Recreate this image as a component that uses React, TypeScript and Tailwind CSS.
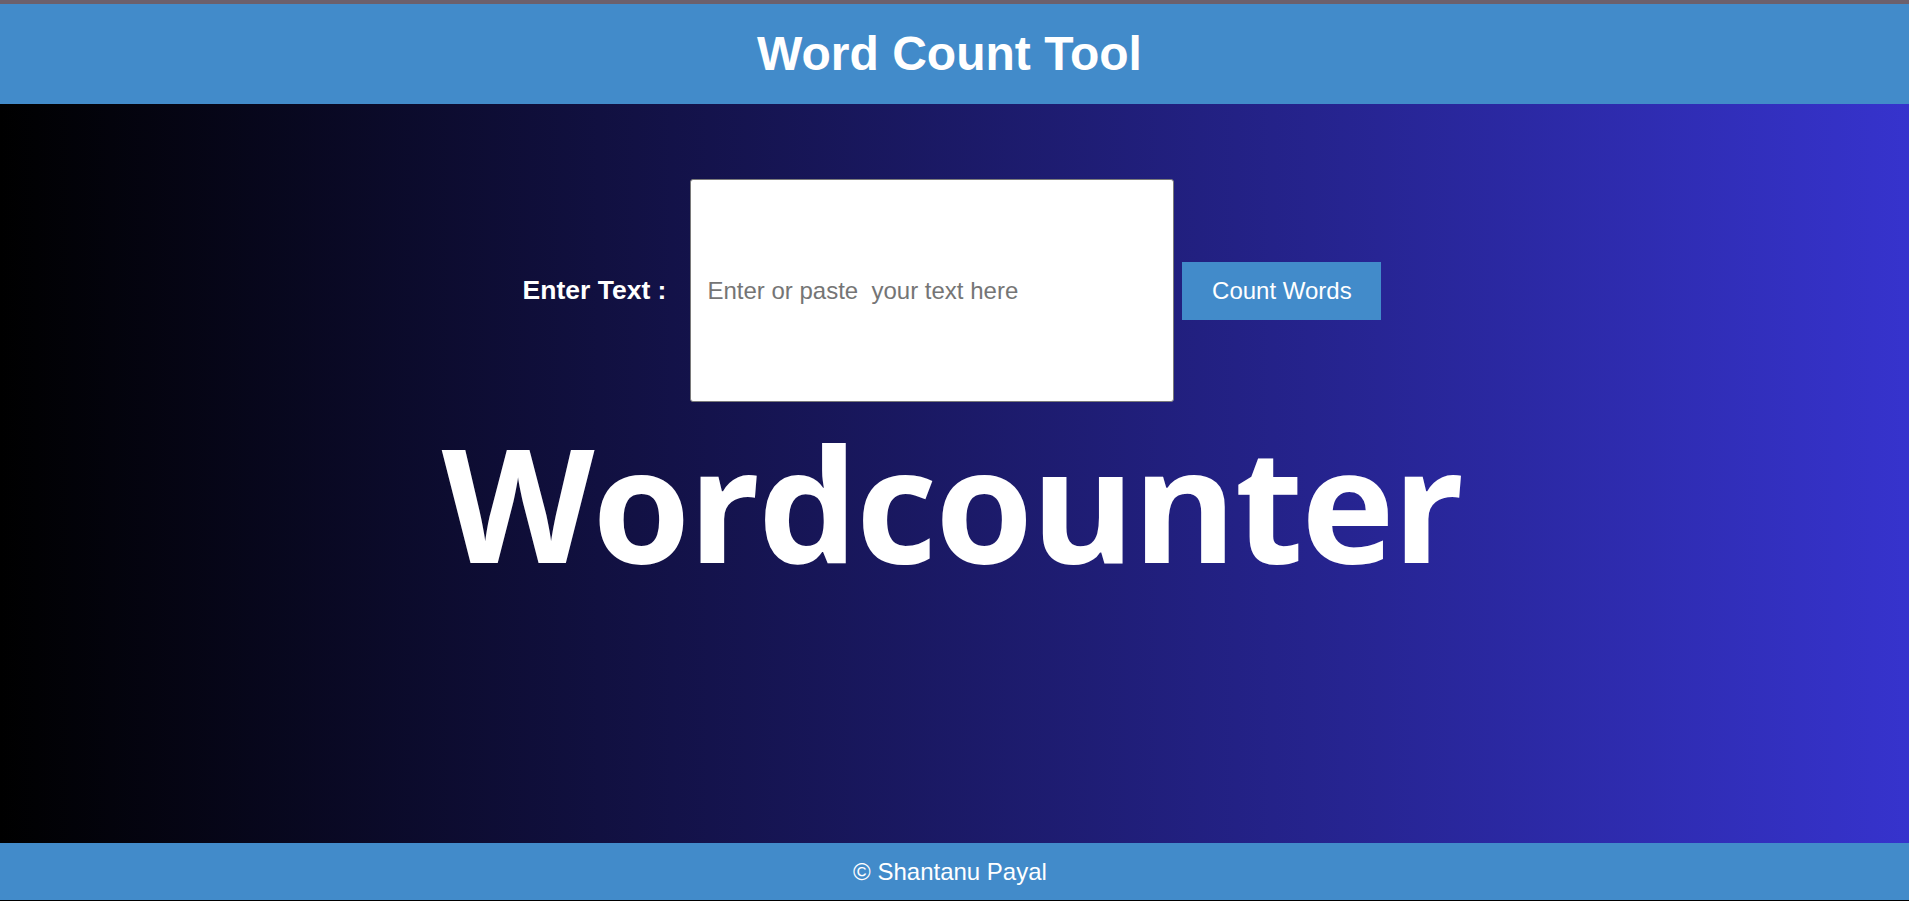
export default function App() {
  const sans = { fontFamily: '"Liberation Sans", Arial, sans-serif' }

  return (
    <div className="flex min-h-screen flex-col border-t-4 border-[#6c606c]" style={sans}>
      <header className="flex h-[100px] items-center justify-center bg-[#428bca] pr-[10px]">
        <h1 className="text-[48px] font-bold text-white">Word Count Tool</h1>
      </header>

      <main className="flex flex-1 flex-col items-center bg-[linear-gradient(to_right,#000000,#3633cd)] pr-[5px] pt-[75px]">
        <div className="flex items-center">
          <label htmlFor="text" className="mr-[24px] text-[26.5px] font-bold text-white">
            Enter Text :
          </label>
          <textarea
            id="text"
            placeholder="Enter or paste  your text here"
            className="h-[223px] w-[484px] resize-none rounded-[3px] border border-[#7a7a7a] bg-white pl-[16px] pt-[93px] text-[24px] text-black outline-none placeholder:text-[#757575]"
          />
          <button className="ml-[8px] h-[58px] w-[199px] bg-[#428bca] text-[24px] text-white">
            Count Words
          </button>
        </div>

        <div
          className="mt-[21px] h-[158px] text-[158px] leading-none font-bold tracking-[-2px] text-white"
          style={{ fontFamily: '"Open Sans", "Noto Sans", sans-serif' }}
        >
          Wordcounter
        </div>
      </main>

      <footer className="flex h-[58px] items-center justify-center border-b border-black bg-[#428bca] pr-[9px] text-[24px] text-white">
        © Shantanu Payal
      </footer>
    </div>
  )
}
